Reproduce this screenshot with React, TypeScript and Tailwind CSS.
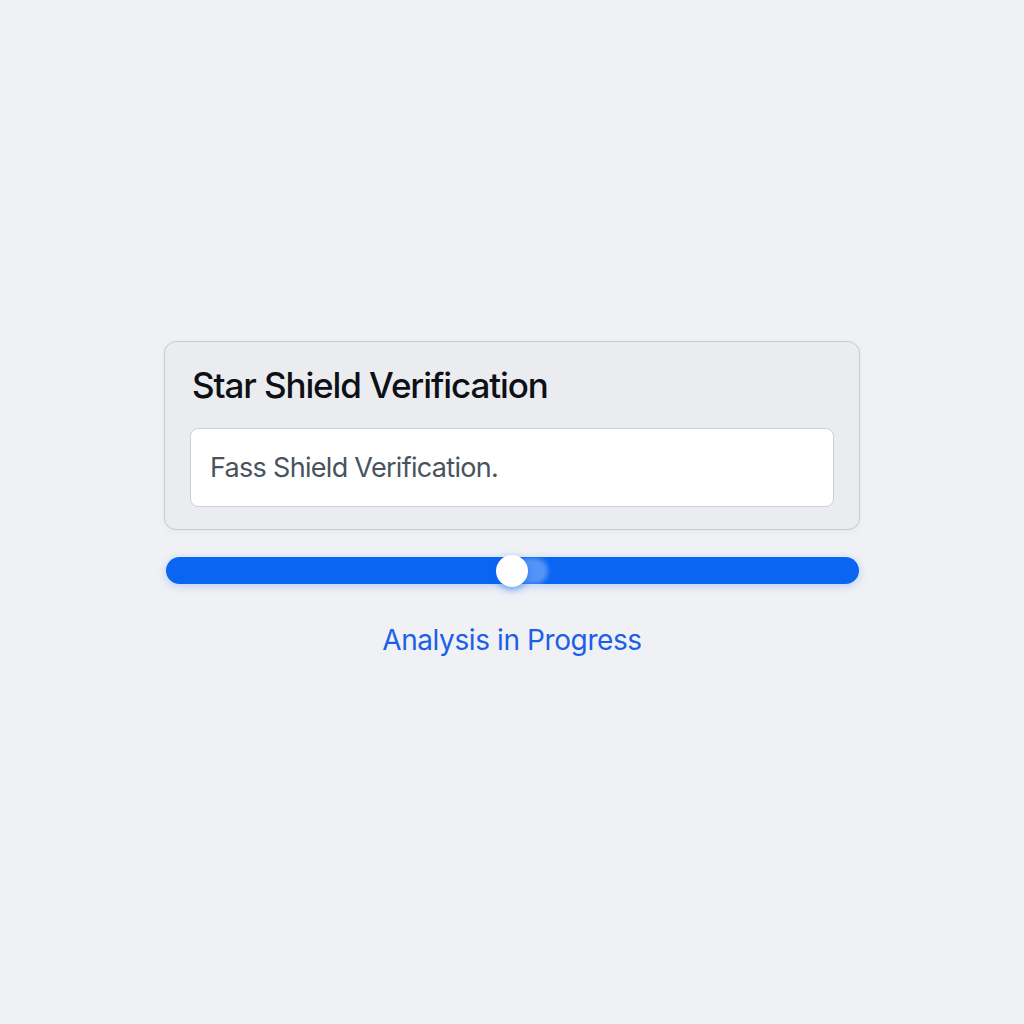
export default function App() {
  const progress = 50;

  return (
    <div className="min-h-screen w-full bg-[#eff1f4] flex flex-col items-center pt-[341px] font-['Inter',sans-serif]">
      <div className="w-[696px] h-[189px] rounded-[12px] border border-[#c5cbd6] bg-[#eaecef] px-[25px] pt-[23px] shadow-[0_2px_6px_rgba(0,0,0,0.04)]">
        <h1 className="pl-[2px] text-[35px] leading-[40px] font-medium text-[#0d1015] tracking-[-1.1px]">
          Star Shield Verification
        </h1>
        <div className="mt-[23px] h-[79px] rounded-[8px] border border-[#c9ced8] bg-white flex items-center px-[19px]">
          <span className="text-[27px] leading-[36px] text-[#48535e] tracking-[-0.7px]">Fass Shield Verification.</span>
        </div>
      </div>

      <div className="relative mt-[27px] w-[693px] h-[27px] rounded-full bg-[#0a66f2] shadow-[0_2px_8px_rgba(11,102,242,0.25)]">
        <div
          className="absolute top-1/2 w-[34px] h-[26px] -translate-y-1/2 rounded-full bg-white/30 blur-[2px]"
          style={{ left: `calc(${progress}% + 2px)` }}
        />
        <div
          className="absolute top-1/2 -translate-x-1/2 -translate-y-1/2 w-[32px] h-[32px] rounded-full bg-white shadow-[0_3px_6px_rgba(11,102,242,0.5)]"
          style={{ left: `${progress}%` }}
        />
      </div>

      <p className="mt-[39px] text-[28px] leading-[34px] text-[#1c5fe8] tracking-[-0.4px]">Analysis in Progress</p>
    </div>
  );
}
